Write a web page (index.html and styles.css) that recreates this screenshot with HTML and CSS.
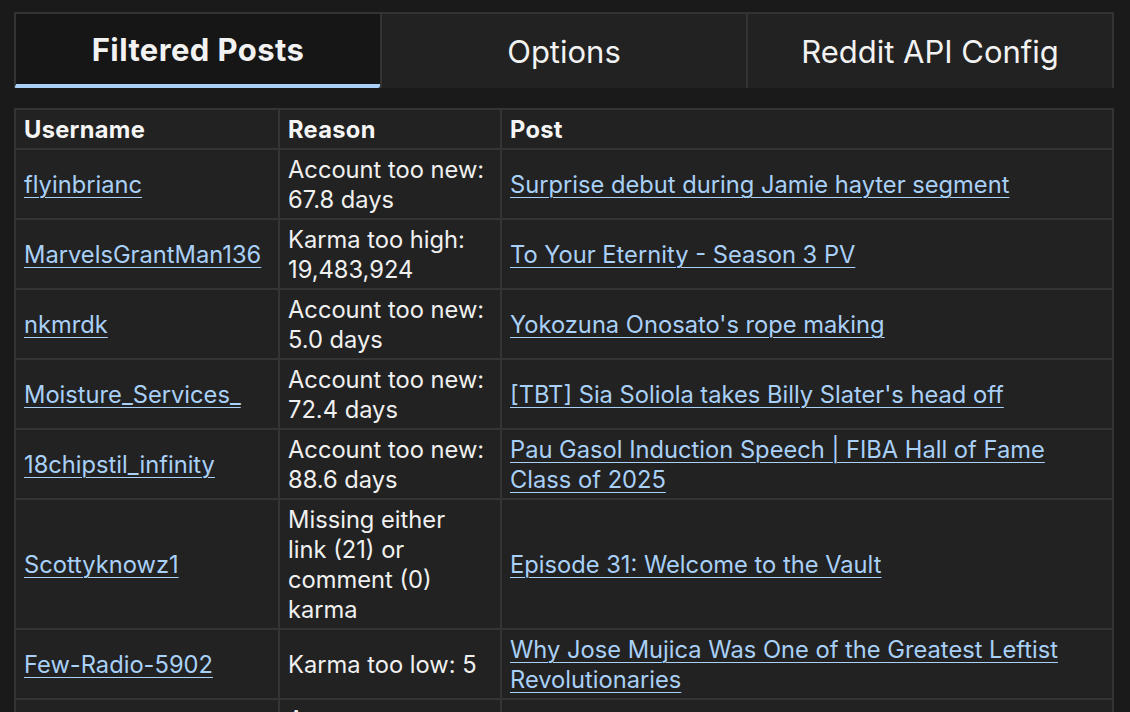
FILE: index.html
```html
<!DOCTYPE html>
<html lang="en">
<head>
<meta charset="utf-8">
<title>Filtered Posts</title>
<link rel="stylesheet" href="styles.css">
</head>
<body>
<div class="app">
  <nav class="tabs">
    <button class="tab active">Filtered Posts</button>
    <button class="tab">Options</button>
    <button class="tab">Reddit API Config</button>
  </nav>
  <table class="posts">
    <colgroup>
      <col class="c-user">
      <col class="c-reason">
      <col class="c-post">
    </colgroup>
    <thead>
      <tr><th>Username</th><th class="reason">Reason</th><th>Post</th></tr>
    </thead>
    <tbody>
      <tr>
        <td><a href="#">flyinbrianc</a></td>
        <td class="reason">Account too new: 67.8 days</td>
        <td><a href="#">Surprise debut during Jamie hayter segment</a></td>
      </tr>
      <tr>
        <td><a href="#">MarvelsGrantMan136</a></td>
        <td class="reason">Karma too high: 19,483,924</td>
        <td><a href="#">To Your Eternity - Season 3 PV</a></td>
      </tr>
      <tr>
        <td><a href="#">nkmrdk</a></td>
        <td class="reason">Account too new: 5.0 days</td>
        <td><a href="#">Yokozuna Onosato's rope making</a></td>
      </tr>
      <tr>
        <td><a href="#">Moisture_Services_</a></td>
        <td class="reason">Account too new: 72.4 days</td>
        <td><a href="#">[TBT] Sia Soliola takes Billy Slater's head off</a></td>
      </tr>
      <tr>
        <td><a href="#">18chipstil_infinity</a></td>
        <td class="reason">Account too new: 88.6 days</td>
        <td><a href="#">Pau Gasol Induction Speech | FIBA Hall of Fame Class of 2025</a></td>
      </tr>
      <tr>
        <td><a href="#">Scottyknowz1</a></td>
        <td class="reason">Missing either link (21) or comment (0) karma</td>
        <td><a href="#">Episode 31: Welcome to the Vault</a></td>
      </tr>
      <tr>
        <td><a href="#">Few-Radio-5902</a></td>
        <td class="reason">Karma too low: 5</td>
        <td><a href="#">Why Jose Mujica Was One of the Greatest Leftist Revolutionaries</a></td>
      </tr>
      <tr>
        <td><a href="#">ocean_runner</a></td>
        <td class="reason">Account too new: 12.3 days</td>
        <td><a href="#">Weekly discussion thread</a></td>
      </tr>
    </tbody>
  </table>
</div>
</body>
</html>
```

FILE: styles.css
```css
html, body {
  margin: 0;
  padding: 0;
  background: #1a1a1a;
  color: #f0f0f0;
  font-family: Inter, "Noto Sans", "Liberation Sans", sans-serif;
  overflow: hidden;
}

.app {
  padding: 12px 16px 0 14px;
}

.tabs {
  display: flex;
  height: 76px;
  width: 1100px;
}

.tab {
  flex: 1 1 0;
  min-width: 0;
  margin: 0;
  background: #222222;
  color: #f2f2f2;
  font-family: inherit;
  font-size: 31px;
  font-weight: 400;
  border: 2px solid #333333;
  border-bottom: none;
  border-right: none;
  padding: 0;
  cursor: pointer;
}

.tab:last-child {
  border-right: 2px solid #333333;
}

.tab.active {
  background: #161616;
  font-weight: 700;
  letter-spacing: 0.4px;
  border-bottom: 4px solid #a9d0f7;
  border-bottom-left-radius: 2px;
  border-bottom-right-radius: 2px;
}

.posts {
  margin-top: 20px;
  width: 1100px;
  border-collapse: collapse;
  table-layout: fixed;
  font-size: 23.7px;
  line-height: 30px;
}

.c-user { width: 264px; }
.c-reason { width: 222px; }
.c-post { width: auto; }

.posts th,
.posts td {
  border: 2px solid #343434;
  background: #222222;
  padding: 5px 8px 3px;
  text-align: left;
  vertical-align: middle;
}

.posts .reason {
  padding-right: 12px;
}

.posts th {
  font-weight: 700;
  color: #f5f5f5;
  letter-spacing: 0.3px;
}

.posts a {
  color: #a9d0f7;
  text-decoration: underline;
  text-underline-offset: 4px;
  text-decoration-thickness: 1px;
}
```
